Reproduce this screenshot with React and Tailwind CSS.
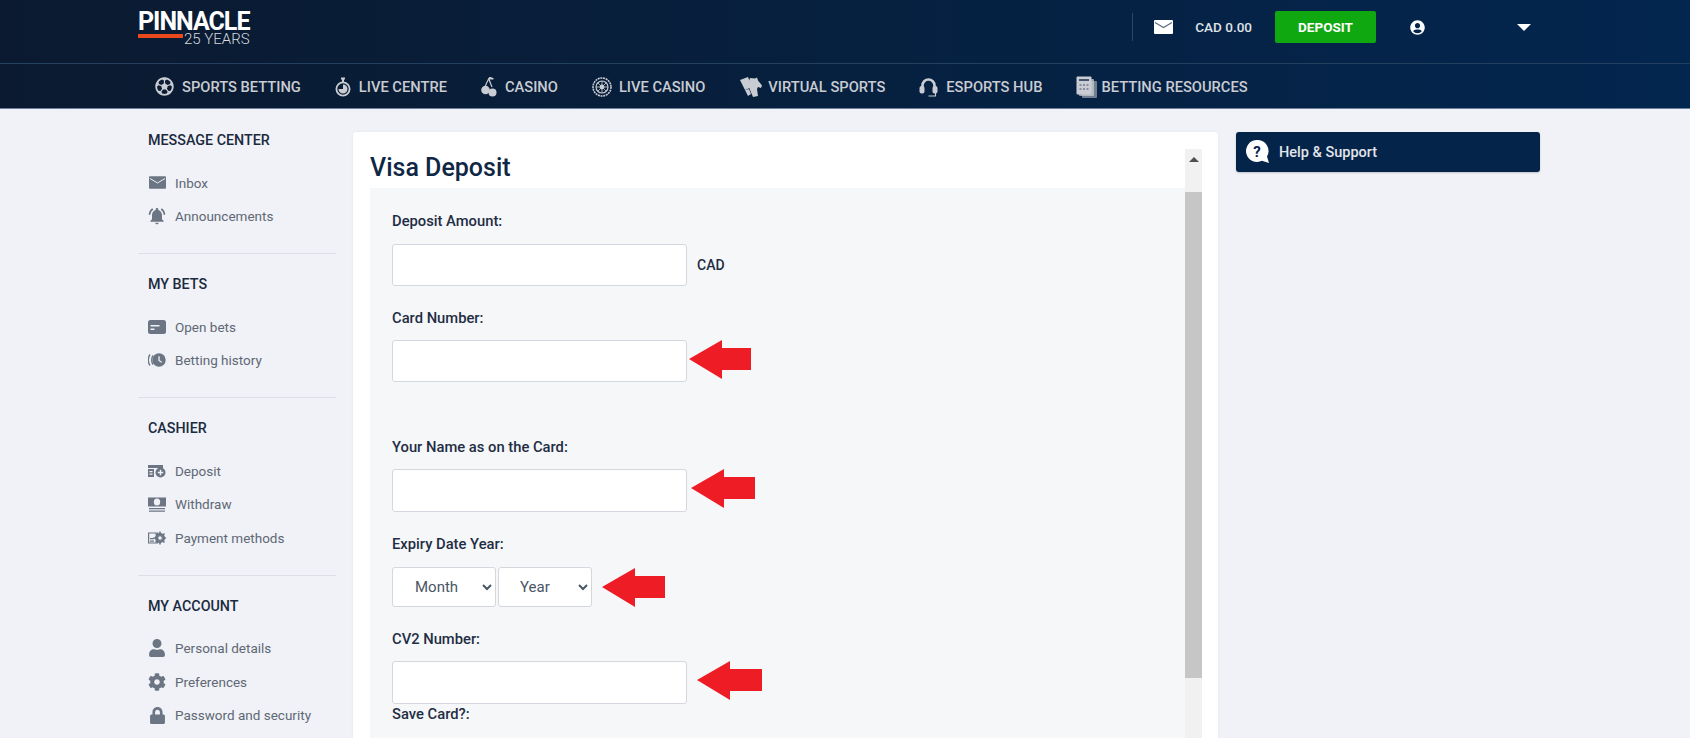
import { FaRegFutbol, FaUser, FaCog, FaLock, FaUserCircle } from 'react-icons/fa'
import { MdNotificationsActive } from 'react-icons/md'

const Stopwatch = () => (
  <svg viewBox="0 0 16 20" className="w-4 h-5" fill="none" stroke="currentColor">
    <rect x="6" y="0.5" width="4" height="2" fill="currentColor" stroke="none" />
    <rect x="7" y="2" width="2" height="3" fill="currentColor" stroke="none" />
    <circle cx="8" cy="12" r="6.6" strokeWidth="1.8" />
    <path d="M8 12V7.5A4.5 4.5 0 1 1 3.5 12Z" fill="currentColor" stroke="none" />
  </svg>
)

const Cherries = () => (
  <svg viewBox="0 0 16 22" className="w-4 h-[22px]" fill="currentColor">
    <path d="M8 1c2 0 4 .5 5 2-2 1-4 .5-5-.5z" />
    <path d="M8 2C7 5 5 7 4.5 10M8 2c0 3 2 6 3 9" fill="none" stroke="currentColor" strokeWidth="1.2" />
    <circle cx="4.5" cy="14" r="4.3" />
    <circle cx="11.5" cy="16.5" r="4" />
  </svg>
)

const Roulette = () => (
  <svg viewBox="0 0 20 20" className="w-5 h-5" fill="none" stroke="currentColor">
    <circle cx="10" cy="10" r="9" strokeWidth="1.6" strokeDasharray="2 .7" />
    <circle cx="10" cy="10" r="6" strokeWidth="1.2" />
    <circle cx="10" cy="10" r="2.4" fill="currentColor" stroke="none" />
    <path d="M10 4v12M4 10h12M6 6l8 8M14 6l-8 8" strokeWidth=".8" />
  </svg>
)

const VirtualIcon = () => (
  <svg viewBox="0 0 24 22" className="w-6 h-[22px]" fill="currentColor">
    <path d="M1 4l8-3 4 10-7 3z" />
    <path d="M11 2l5 .5 2-1 1 3 4 5-1 2.5-3-1-1 2 1 7-5 1-3-7-2-6z" />
    <path d="M6 14l4-1 2 5-3 2z" />
  </svg>
)

const Headset = () => (
  <svg viewBox="0 0 19 20" className="w-[19px] h-5 shrink-0" fill="none" stroke="currentColor">
    <path d="M3.500 11V8.500a6 6 0 0 1 12 0V11" strokeWidth="2.600" />
    <rect x="0.500" y="9" width="5" height="7.500" rx="2" fill="currentColor" stroke="none" />
    <rect x="13.500" y="9" width="5" height="7.500" rx="2" fill="currentColor" stroke="none" />
    <path d="M16.500 16v3H9.500" strokeWidth="1.200" />
  </svg>
)

const Resources = () => (
  <svg viewBox="0 0 21 22" className="w-[21px] h-[22px]" fill="currentColor">
    <rect x="6" y="5" width="15" height="17" rx="1" opacity=".55" />
    <rect x="3" y="3" width="15" height="17" rx="1" opacity=".75" />
    <rect x="0.5" y="0.5" width="15" height="18" rx="1" />
    <rect x="3" y="3" width="10" height="2" fill="#0a2244" opacity=".7" />
    <path d="M3.500 8h2v2h-2zM7 8h2v2H7zM10.500 8h2v2h-2zM3.500 12h2v2h-2zM7 12h2v2H7zM10.500 12h2v2h-2z" fill="#0a2244" opacity=".35" />
  </svg>
)

const MailIcon = ({ className, flap }) => (
  <svg viewBox="0 0 19 14" className={className}>
    <rect width="19" height="14" rx="1" fill="currentColor" />
    <path d="M1 2.5l8.5 5 8.5-5" fill="none" stroke={flap} strokeWidth="1.1" />
  </svg>
)

const CardIcon = () => (
  <svg viewBox="0 0 18 14" className="w-[18px] h-[14px]">
    <rect width="18" height="14" rx="2.5" fill="currentColor" />
    <path d="M2.5 5h9v1.6h-9zM2.5 8.5h4v1.6h-4z" fill="#f0f2f7" />
  </svg>
)

const HistoryIcon = () => (
  <svg viewBox="0 0 18 14" className="w-[18px] h-[14px]" fill="none">
    <path d="M2 1.500C-.2 4.500-.2 9.500 2 12.500M5 2.500C3.200 5 3.200 9 5 11.500" stroke="currentColor" strokeWidth="1.300" />
    <circle cx="11" cy="7" r="6.700" fill="currentColor" />
    <path d="M11 3.300V7.500l2.700 1.700" stroke="#f0f2f7" strokeWidth="1.300" />
  </svg>
)

const DepositIcon = () => (
  <svg viewBox="0 0 18 14" className="w-[18px] h-[14px]" fill="none">
    <path d="M0 1h15v3H0zM0 5h6v8H0z" fill="currentColor" />
    <path d="M1.500 7h3v1.200h-3zM1.500 9.500h3v1.200h-3z" fill="#f0f2f7" />
    <circle cx="12.500" cy="8.500" r="5" fill="currentColor" />
    <path d="M12.500 5.800v5.400M9.800 8.500h5.400" stroke="#f0f2f7" strokeWidth="1.400" />
  </svg>
)

const WithdrawIcon = () => (
  <svg viewBox="0 0 18 15" className="w-[18px] h-[15px]" fill="currentColor">
    <rect y="0.500" width="18" height="9" />
    <ellipse cx="9" cy="5" rx="3.200" ry="3.500" fill="#f0f2f7" />
    <path d="M1 11h16v1.200H1zM1 13.500h16v1.200H1z" />
  </svg>
)

const PaymentIcon = () => (
  <svg viewBox="0 0 18 14" className="w-[18px] h-[14px]" fill="none">
    <path d="M.6 2h9v10h-9z" stroke="currentColor" strokeWidth="1.200" />
    <path d="M2 7h4v1.200H2zM2 9.500h4v1.200H2z" fill="currentColor" />
    <circle cx="12" cy="7" r="3.800" stroke="currentColor" strokeWidth="2.400" />
    <path d="M12 .500v13M5.500 7h13M7.500 2.500l9 9M16.500 2.500l-9 9" stroke="currentColor" strokeWidth="1.600" />
    <circle cx="12" cy="7" r="1.800" fill="#f0f2f7" />
  </svg>
)

const HelpIcon = () => (
  <svg viewBox="0 0 24 24" className="w-6 h-6">
    <path d="M11 0a11 11 0 1 0 5 20.800L23 23l-2-6.500A11 11 0 0 0 11 0z" fill="#fff" />
    <text x="11" y="16.500" textAnchor="middle" fontSize="15" fontWeight="700" fill="#05244a" fontFamily="Roboto, sans-serif">?</text>
  </svg>
)

// red call-out arrows pasted over the form
const RedArrow = ({ className, width }) => (
  <svg viewBox={`0 0 ${width} 39`} width={width} height="39" className={className}>
    <path d={`M0 19 L33 0 L33 8 L${width} 8 L${width} 30 L33 30 L33 39 Z`} fill="#ee1c25" />
  </svg>
)

const NAV = [
  { label: 'Sports Betting', icon: <FaRegFutbol className="w-[19px] h-[19px]" />, gap: 'gap-2' },
  { label: 'Live Centre', icon: <Stopwatch />, gap: 'gap-2' },
  { label: 'Casino', icon: <Cherries />, gap: 'gap-2' },
  { label: 'Live Casino', icon: <Roulette />, gap: 'gap-[7px]' },
  { label: 'Virtual Sports', icon: <VirtualIcon />, gap: 'gap-[5px]' },
  { label: 'Esports Hub', icon: <Headset />, gap: 'gap-2' },
  { label: 'Betting Resources', icon: <Resources />, gap: 'gap-1' },
]

const SECTIONS = [
  {
    title: 'Message Center',
    items: [
      { label: 'Inbox', icon: <MailIcon className="w-[17px] h-[13px]" flap="#f0f2f7" /> },
      { label: 'Announcements', icon: <MdNotificationsActive className="w-5 h-5 shrink-0" /> },
    ],
  },
  {
    title: 'My Bets',
    items: [
      { label: 'Open bets', icon: <CardIcon /> },
      { label: 'Betting history', icon: <HistoryIcon /> },
    ],
  },
  {
    title: 'Cashier',
    items: [
      { label: 'Deposit', icon: <DepositIcon /> },
      { label: 'Withdraw', icon: <WithdrawIcon /> },
      { label: 'Payment methods', icon: <PaymentIcon /> },
    ],
  },
  {
    title: 'My Account',
    items: [
      { label: 'Personal details', icon: <FaUser className="w-[18px] h-[18px]" /> },
      { label: 'Preferences', icon: <FaCog className="w-[18px] h-[18px]" /> },
      { label: 'Password and security', icon: <FaLock className="w-[17px] h-[17px]" /> },
    ],
  },
]

function Header() {
  return (
    <header className="bg-gradient-to-r from-[#0b1a30] via-[#06203f] to-[#03264f]">
      <div className="h-16 flex items-center pl-[138px] pr-[159px] border-b border-[#24405f]">
        <div className="w-[112px] text-white -mt-[5px]">
          <div className="text-[25px] leading-[20px] font-bold tracking-[-1px]">PINNACLE</div>
          <div className="flex items-start mt-[1px]">
            <span className="w-[45px] h-1 mt-px bg-[#e9491d]" />
            <span className="ml-[1px] text-[15px] leading-[13px] font-light text-[#d5d8dd]">25 YEARS</span>
          </div>
        </div>
        <div className="ml-auto -mt-[9px] flex items-center">
          <span className="w-px h-[28px] bg-[#2b4766]" />
          <MailIcon className="ml-[21px] w-[19px] h-[14px] text-white" flap="#5b6b80" />
          <span className="ml-[22px] text-[13.5px] font-medium text-[#dfe2e7]">CAD 0.00</span>
          <button className="ml-[23px] w-[101px] h-8 rounded-[2px] bg-[#10a811] text-white text-[13.5px] font-bold">DEPOSIT</button>
          <FaUserCircle className="ml-[34px] w-[15px] h-[15px] text-white" />
          <span className="ml-[92px] w-0 h-0 border-x-[7px] border-x-transparent border-t-[7px] border-t-white" />
        </div>
      </div>
      <nav className="h-[45px] flex items-center pt-[2px] pl-[155px] gap-[34px] border-b border-[#6d809a]">
        {NAV.map(n => (
          <a key={n.label} className={`flex items-center ${n.gap} text-[#c9ccd2]`}>
            {n.icon}
            <span className="text-[14.7px] font-medium uppercase">{n.label}</span>
          </a>
        ))}
      </nav>
    </header>
  )
}

function Sidebar() {
  return (
    <aside className="w-[198px] pt-[21px] shrink-0">
      {SECTIONS.map((s, i) => (
        <div key={s.title} className={i < SECTIONS.length - 1 ? 'pb-5 mb-5 border-b border-[#dcdfe5]' : ''}>
          <h3 className="pl-[10px] h-5 leading-5 text-[14.3px] font-medium uppercase text-[#1b2a3e]">{s.title}</h3>
          <ul className="mt-4">
            {s.items.map(it => (
              <li key={it.label} className="h-[33.5px] flex items-center pl-[10px] text-[#6b7583]">
                <span className="w-[18px] flex justify-center">{it.icon}</span>
                <span className="ml-[9px] text-[13.5px] text-[#5f6875]">{it.label}</span>
              </li>
            ))}
          </ul>
        </div>
      ))}
    </aside>
  )
}

const inputCls = 'w-[295px] h-[42px] shrink-0 rounded-[3px] border border-[#d4d7dd] bg-white'
const selectCls = 'h-10 rounded-[3px] border border-[#d4d7dd] bg-white text-[15px] text-[#4a5565]'
const labelCls = 'h-5 leading-5 text-[14.75px] font-medium text-[#1f2e44]'

function DepositForm() {
  return (
    <div className="flex-1 min-w-0">
      <h1 className="h-[39px] leading-[37px] text-[25px] font-medium text-[#0f2744]">Visa Deposit</h1>
      <div className="h-[600px] bg-[#f6f7f9] pl-[22px] pt-[23px]">
        <div className={labelCls}>Deposit Amount:</div>
        <div className="mt-[13px] flex items-center">
          <input className={inputCls} />
          <span className="ml-[10px] text-[14px] font-medium text-[#1f2e44]">CAD</span>
        </div>

        <div className={`${labelCls} mt-[22px]`}>Card Number:</div>
        <div className="mt-3 flex items-center">
          <input className={inputCls} />
          <RedArrow width={62} className="ml-[2px] -mt-[4px]" />
        </div>

        <div className={`${labelCls} mt-[55px]`}>Your Name as on the Card:</div>
        <div className="mt-3 flex items-center">
          <input className={`${inputCls} h-[43px]`} />
          <RedArrow width={64} className="ml-[4px] -mt-[4px]" />
        </div>

        <div className={`${labelCls} mt-[22px]`}>Expiry Date Year:</div>
        <div className="mt-[13px] flex items-center gap-[2px]">
          <select className={`${selectCls} pl-[18px] w-[104px]`}><option>Month</option></select>
          <select className={`${selectCls} pl-[17px] w-[94px]`}><option>Year</option></select>
          <RedArrow width={63} className="ml-[8px]" />
        </div>

        <div className={`${labelCls} mt-[22px]`}>CV2 Number:</div>
        <div className="mt-3 flex items-center">
          <input className={`${inputCls} h-[43px]`} />
          <RedArrow width={65} className="ml-[10px] -mt-[4px]" />
        </div>

        <div className={labelCls}>Save Card?:</div>
      </div>
    </div>
  )
}

function Scrollbar() {
  return (
    <div className="w-[17px] shrink-0 bg-[#f1f1f1] flex flex-col">
      <div className="h-[43px] flex justify-center pt-2">
        <span className="w-0 h-0 border-x-[5px] border-x-transparent border-b-[5px] border-b-[#505050]" />
      </div>
      <div className="w-full h-[486px] bg-[#c6c6c6]" />
    </div>
  )
}

export default function App() {
  return (
    <div className="h-[738px] overflow-hidden bg-[#f0f2f7] font-['Roboto',sans-serif]">
      <Header />
      <main className="flex pl-[138px]">
        <Sidebar />
        <section className="ml-[17px] mt-[23px] w-[865px] h-[700px] flex bg-white rounded-[3px] pt-[17px] pl-[17px] pr-4 shadow-[0_0_3px_rgba(0,0,0,0.06)]">
          <DepositForm />
          <Scrollbar />
        </section>
        <div className="ml-[18px] mt-[23px] w-[304px] h-10 flex items-center pl-[10px] rounded-[3px] bg-[#05244a] shadow-[0_1px_2px_rgba(0,0,0,0.2)]">
          <HelpIcon />
          <span className="ml-[9px] pt-px text-[14.5px] font-medium text-[#e3e6ea]">Help &amp; Support</span>
        </div>
      </main>
    </div>
  )
}
